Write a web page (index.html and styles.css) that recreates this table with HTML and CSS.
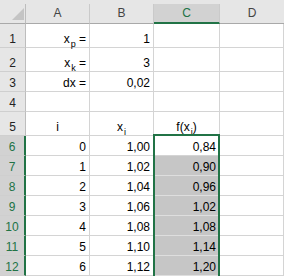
FILE: index.html
```html
<!DOCTYPE html>
<html>
<head>
<meta charset="utf-8">
<link rel="stylesheet" href="styles.css">
</head>
<body>
<div class="wrap">
  <div class="strip"></div>
  <div class="sheet">
    <div class="ch corner"><svg width="12" height="12" viewBox="0 0 12 12"><polygon points="0,12 12,12 12,0" fill="#c4c4c4"/></svg></div>
    <div class="ch">A</div>
    <div class="ch">B</div>
    <div class="ch sel">C</div>
    <div class="ch last">D</div>

    <div class="rh">1</div>
    <div class="c r"><span>x<sub>p</sub> =</span></div>
    <div class="c r">1</div>
    <div class="c"></div>
    <div class="c"></div>

    <div class="rh">2</div>
    <div class="c r"><span>x<sub>k</sub> =</span></div>
    <div class="c r">3</div>
    <div class="c"></div>
    <div class="c"></div>

    <div class="rh">3</div>
    <div class="c r">dx =</div>
    <div class="c r">0,02</div>
    <div class="c"></div>
    <div class="c"></div>

    <div class="rh">4</div>
    <div class="c"></div>
    <div class="c"></div>
    <div class="c"></div>
    <div class="c"></div>

    <div class="rh">5</div>
    <div class="c m">i</div>
    <div class="c m"><span>x<sub>i</sub></span></div>
    <div class="c m"><span>f(x<sub>i</sub>)</span></div>
    <div class="c"></div>

    <div class="rh sel">6</div>
    <div class="c r">0</div>
    <div class="c r">1,00</div>
    <div class="c r">0,84</div>
    <div class="c"></div>

    <div class="rh sel">7</div>
    <div class="c r">1</div>
    <div class="c r">1,02</div>
    <div class="c r hl">0,90</div>
    <div class="c"></div>

    <div class="rh sel">8</div>
    <div class="c r">2</div>
    <div class="c r">1,04</div>
    <div class="c r hl">0,96</div>
    <div class="c"></div>

    <div class="rh sel">9</div>
    <div class="c r">3</div>
    <div class="c r">1,06</div>
    <div class="c r hl">1,02</div>
    <div class="c"></div>

    <div class="rh sel">10</div>
    <div class="c r">4</div>
    <div class="c r">1,08</div>
    <div class="c r hl">1,08</div>
    <div class="c"></div>

    <div class="rh sel">11</div>
    <div class="c r">5</div>
    <div class="c r">1,10</div>
    <div class="c r hl">1,14</div>
    <div class="c"></div>

    <div class="rh sel">12</div>
    <div class="c r">6</div>
    <div class="c r">1,12</div>
    <div class="c r hl">1,20</div>
    <div class="c"></div>
  </div>
  <div class="selection"></div>
</div>
</body>
</html>
```

FILE: styles.css
```css
html, body {
  margin: 0;
  padding: 0;
  background: #ffffff;
}
body {
  font-family: "Liberation Sans", Arial, sans-serif;
  font-size: 12px;
  color: #000;
}
.wrap {
  position: relative;
  width: 284px;
  height: 276px;
  overflow: hidden;
}
.strip {
  height: 4px;
  background: #e6e6e6;
}
.sheet {
  display: grid;
  grid-template-columns: 26px 64px 64px 66px 1fr;
  grid-template-rows: 20px 24px 24px 20px 20px 24px repeat(7, 20px);
}
.sheet > div {
  box-sizing: border-box;
  display: flex;
  align-items: flex-end;
  line-height: 14px;
  padding-bottom: 1px;
  white-space: nowrap;
}
.ch {
  background: #e6e6e6;
  border-right: 1px solid #cacaca;
  border-bottom: 1px solid #a9a9a9;
  justify-content: center;
  color: #444;
  padding-bottom: 3px !important;
}
.ch.corner {
  justify-content: flex-end;
  padding: 0 1px 3px 0 !important;
  border-right-color: #bdbdbd;
}
.ch.corner svg {
  display: block;
}
.ch.sel {
  background: #d2d2d2;
  color: #217346;
  border-bottom: 2px solid #217346;
  padding-bottom: 2px !important;
}
.ch.last {
  border-right: none;
}
.rh {
  background: #e6e6e6;
  border-right: 1px solid #bdbdbd;
  border-bottom: 1px solid #cfcfcf;
  justify-content: center;
  color: #222;
}
.rh.sel {
  background: #d2d2d2;
  color: #217346;
  border-right: 2px solid #217346;
}
.c {
  border-right: 1px solid #d4d4d4;
  border-bottom: 1px solid #d4d4d4;
  padding-right: 3px;
  padding-left: 3px;
}
.c.r {
  justify-content: flex-end;
}
.c.m {
  justify-content: center;
}
.c.hl {
  background: #c6c6c6;
  border-bottom-color: #dedede;
}
sub {
  font-size: 9px;
  line-height: 0;
  vertical-align: -4px;
  margin-left: 1px;
}
.selection {
  position: absolute;
  left: 153px;
  top: 134px;
  width: 67px;
  height: 150px;
  box-sizing: border-box;
  border: 2px solid #217346;
  pointer-events: none;
}
```
